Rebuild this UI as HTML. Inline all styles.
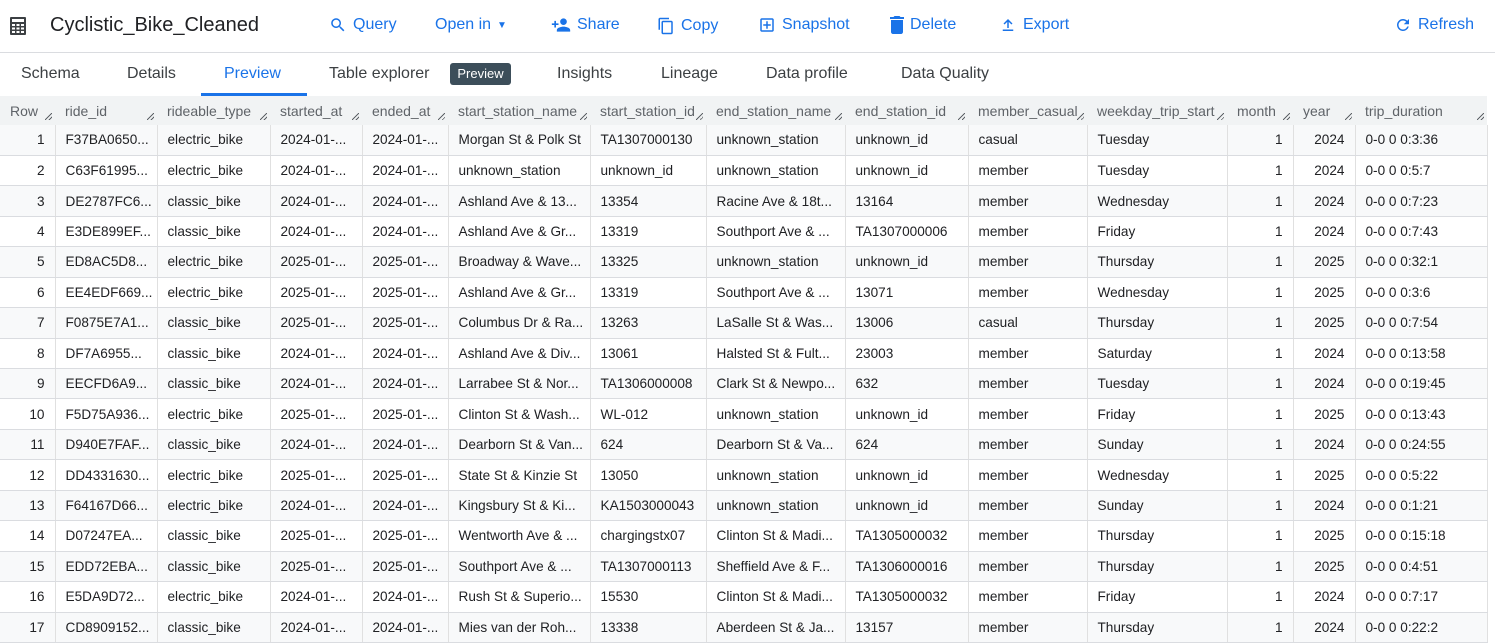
<!DOCTYPE html>
<html><head><meta charset="utf-8"><style>
*{margin:0;padding:0;box-sizing:border-box}
body{width:1495px;height:642px;overflow:hidden;background:#fff;font-family:"Liberation Sans",Arial,sans-serif;color:#202124;position:relative}
.top{position:absolute;left:0;top:0;width:1495px;height:53px;border-bottom:1px solid #dadce0}
.title{position:absolute;left:50px;top:14px;font-size:20px;color:#202124}
.btn{position:absolute;top:16px;font-size:16px;color:#1a73e8;display:flex;align-items:center;gap:6px}
.btn svg{fill:#1a73e8}
.tabs{position:absolute;top:53px;left:0;width:1495px;height:43px}
.tab{position:absolute;top:12px;font-size:16px;color:#3c4043}
.tab.act{color:#1a73e8}
.badge{position:absolute;left:450px;top:63px;width:61px;height:22px;background:#3c4e5a;color:#fff;font-size:13px;border-radius:3px;text-align:center;line-height:22px}
table{position:absolute;left:0;top:96px;border-collapse:collapse;table-layout:fixed;width:1487px;font-size:13.6px}
th{height:29px;background:#f1f3f4;color:#5f6368;font-weight:normal;text-align:left;padding:0 10px;position:relative;white-space:nowrap;overflow:hidden;font-size:14px}
th:after{content:"";position:absolute;right:3px;bottom:5px;width:7px;height:7px;background:linear-gradient(135deg,transparent 45%,#5f6368 45%,#5f6368 55%,transparent 55%,transparent 75%,#5f6368 75%,#5f6368 85%,transparent 85%)}
td{height:30.45px;padding:0 10px;border-right:1px solid #e0e0e0;border-bottom:1px solid #dadce0;white-space:nowrap;overflow:hidden}
tr:nth-child(even) td{background:#f8f9fa}
td:first-child,td:nth-child(12),td:nth-child(13){text-align:right}
</style></head><body>
<div class="top">
<svg style="position:absolute;left:10px;top:17px" width="16" height="18" viewBox="0 0 16 18"><rect x="0" y="0" width="16" height="18" rx="1" fill="#3c4043"/><rect x="2" y="2" width="12" height="3" fill="#fff"/><g fill="#fff"><rect x="2" y="7" width="3" height="2"/><rect x="6.5" y="7" width="3" height="2"/><rect x="11" y="7" width="3" height="2"/><rect x="2" y="10.5" width="3" height="2"/><rect x="6.5" y="10.5" width="3" height="2"/><rect x="11" y="10.5" width="3" height="2"/><rect x="2" y="14" width="3" height="2"/><rect x="6.5" y="14" width="3" height="2"/><rect x="11" y="14" width="3" height="2"/></g></svg>
<div class="title">Cyclistic_Bike_Cleaned</div>
<div class="btn" style="left:329px"><svg width="18" height="18" viewBox="0 0 24 24"><path d="M15.5 14h-.8l-.3-.3A6.5 6.5 0 1 0 9.5 16c1.6 0 3.1-.6 4.2-1.6l.3.3v.8l5 5 1.5-1.5-5-5zm-6 0C7 14 5 12 5 9.5S7 5 9.5 5 14 7 14 9.5 12 14 9.5 14z"/></svg>Query</div>
<div class="btn" style="left:435px">Open in <span style="font-size:10px">▼</span></div>
<div class="btn" style="left:551px"><svg width="20" height="16" viewBox="0 0 24 18"><path d="M15 9c2.2 0 4-1.8 4-4s-1.8-4-4-4-4 1.8-4 4 1.8 4 4 4zM6 7V4H4v3H1v2h3v3h2V9h3V7H6zm9 4c-2.7 0-8 1.3-8 4v2h16v-2c0-2.7-5.3-4-8-4z"/></svg>Share</div>
<div class="btn" style="left:657px"><svg width="18" height="20" viewBox="0 0 24 24"><path d="M16 1H4c-1.1 0-2 .9-2 2v14h2V3h12V1zm3 4H8c-1.1 0-2 .9-2 2v14c0 1.1.9 2 2 2h11c1.1 0 2-.9 2-2V7c0-1.1-.9-2-2-2zm0 16H8V7h11v14z"/></svg>Copy</div>
<div class="btn" style="left:758px"><svg width="18" height="18" viewBox="0 0 24 24"><path d="M19 3H5c-1.1 0-2 .9-2 2v14c0 1.1.9 2 2 2h14c1.1 0 2-.9 2-2V5c0-1.1-.9-2-2-2zm0 16H5V5h14v14zM11 7h2v4h4v2h-4v4h-2v-4H7v-2h4z"/></svg>Snapshot</div>
<div class="btn" style="left:890px"><svg width="14" height="18" viewBox="0 0 14 18"><path d="M1 16c0 1.1.9 2 2 2h8c1.1 0 2-.9 2-2V4H1v12zM14 1h-3.5l-1-1h-5l-1 1H0v2h14V1z"/></svg>Delete</div>
<div class="btn" style="left:999px"><svg width="18" height="18" viewBox="0 0 24 24"><path d="M5 18h14v2H5zM11 16V7.8L7.4 11.4 6 10l6-6 6 6-1.4 1.4L13 7.8V16z"/></svg>Export</div>
<div class="btn" style="left:1394px"><svg width="18" height="18" viewBox="0 0 24 24"><path d="M17.65 6.35A7.96 7.96 0 0 0 12 4a8 8 0 1 0 7.75 10h-2.08A6 6 0 1 1 12 6c1.66 0 3.14.69 4.22 1.78L13 11h7V4l-2.35 2.35z"/></svg>Refresh</div>
</div>
<div class="tabs">
<div class="tab" style="left:21px">Schema</div>
<div class="tab" style="left:127px">Details</div>
<div class="tab act" style="left:224px">Preview</div>
<div style="position:absolute;left:201px;top:40px;width:106px;height:3px;background:#1a73e8"></div>
<div class="tab" style="left:329px">Table explorer</div>
<div class="tab" style="left:557px">Insights</div>
<div class="tab" style="left:661px">Lineage</div>
<div class="tab" style="left:766px">Data profile</div>
<div class="tab" style="left:901px">Data Quality</div>
</div>
<div class="badge">Preview</div>
<table>
<colgroup><col style="width:55px"><col style="width:102px"><col style="width:113px"><col style="width:92px"><col style="width:86px"><col style="width:142px"><col style="width:116px"><col style="width:139px"><col style="width:123px"><col style="width:119px"><col style="width:140px"><col style="width:66px"><col style="width:62px"><col style="width:132px"></colgroup>
<tr><th>Row</th><th>ride_id</th><th>rideable_type</th><th>started_at</th><th>ended_at</th><th>start_station_name</th><th>start_station_id</th><th>end_station_name</th><th>end_station_id</th><th>member_casual</th><th>weekday_trip_start</th><th>month</th><th>year</th><th>trip_duration</th></tr>
<tr><td>1</td><td>F37BA0650...</td><td>electric_bike</td><td>2024-01-...</td><td>2024-01-...</td><td>Morgan St &amp; Polk St</td><td>TA1307000130</td><td>unknown_station</td><td>unknown_id</td><td>casual</td><td>Tuesday</td><td>1</td><td>2024</td><td>0-0 0 0:3:36</td></tr>
<tr><td>2</td><td>C63F61995...</td><td>electric_bike</td><td>2024-01-...</td><td>2024-01-...</td><td>unknown_station</td><td>unknown_id</td><td>unknown_station</td><td>unknown_id</td><td>member</td><td>Tuesday</td><td>1</td><td>2024</td><td>0-0 0 0:5:7</td></tr>
<tr><td>3</td><td>DE2787FC6...</td><td>classic_bike</td><td>2024-01-...</td><td>2024-01-...</td><td>Ashland Ave &amp; 13...</td><td>13354</td><td>Racine Ave &amp; 18t...</td><td>13164</td><td>member</td><td>Wednesday</td><td>1</td><td>2024</td><td>0-0 0 0:7:23</td></tr>
<tr><td>4</td><td>E3DE899EF...</td><td>classic_bike</td><td>2024-01-...</td><td>2024-01-...</td><td>Ashland Ave &amp; Gr...</td><td>13319</td><td>Southport Ave &amp; ...</td><td>TA1307000006</td><td>member</td><td>Friday</td><td>1</td><td>2024</td><td>0-0 0 0:7:43</td></tr>
<tr><td>5</td><td>ED8AC5D8...</td><td>electric_bike</td><td>2025-01-...</td><td>2025-01-...</td><td>Broadway &amp; Wave...</td><td>13325</td><td>unknown_station</td><td>unknown_id</td><td>member</td><td>Thursday</td><td>1</td><td>2025</td><td>0-0 0 0:32:1</td></tr>
<tr><td>6</td><td>EE4EDF669...</td><td>electric_bike</td><td>2025-01-...</td><td>2025-01-...</td><td>Ashland Ave &amp; Gr...</td><td>13319</td><td>Southport Ave &amp; ...</td><td>13071</td><td>member</td><td>Wednesday</td><td>1</td><td>2025</td><td>0-0 0 0:3:6</td></tr>
<tr><td>7</td><td>F0875E7A1...</td><td>classic_bike</td><td>2025-01-...</td><td>2025-01-...</td><td>Columbus Dr &amp; Ra...</td><td>13263</td><td>LaSalle St &amp; Was...</td><td>13006</td><td>casual</td><td>Thursday</td><td>1</td><td>2025</td><td>0-0 0 0:7:54</td></tr>
<tr><td>8</td><td>DF7A6955...</td><td>classic_bike</td><td>2024-01-...</td><td>2024-01-...</td><td>Ashland Ave &amp; Div...</td><td>13061</td><td>Halsted St &amp; Fult...</td><td>23003</td><td>member</td><td>Saturday</td><td>1</td><td>2024</td><td>0-0 0 0:13:58</td></tr>
<tr><td>9</td><td>EECFD6A9...</td><td>classic_bike</td><td>2024-01-...</td><td>2024-01-...</td><td>Larrabee St &amp; Nor...</td><td>TA1306000008</td><td>Clark St &amp; Newpo...</td><td>632</td><td>member</td><td>Tuesday</td><td>1</td><td>2024</td><td>0-0 0 0:19:45</td></tr>
<tr><td>10</td><td>F5D75A936...</td><td>electric_bike</td><td>2025-01-...</td><td>2025-01-...</td><td>Clinton St &amp; Wash...</td><td>WL-012</td><td>unknown_station</td><td>unknown_id</td><td>member</td><td>Friday</td><td>1</td><td>2025</td><td>0-0 0 0:13:43</td></tr>
<tr><td>11</td><td>D940E7FAF...</td><td>classic_bike</td><td>2024-01-...</td><td>2024-01-...</td><td>Dearborn St &amp; Van...</td><td>624</td><td>Dearborn St &amp; Va...</td><td>624</td><td>member</td><td>Sunday</td><td>1</td><td>2024</td><td>0-0 0 0:24:55</td></tr>
<tr><td>12</td><td>DD4331630...</td><td>electric_bike</td><td>2025-01-...</td><td>2025-01-...</td><td>State St &amp; Kinzie St</td><td>13050</td><td>unknown_station</td><td>unknown_id</td><td>member</td><td>Wednesday</td><td>1</td><td>2025</td><td>0-0 0 0:5:22</td></tr>
<tr><td>13</td><td>F64167D66...</td><td>electric_bike</td><td>2024-01-...</td><td>2024-01-...</td><td>Kingsbury St &amp; Ki...</td><td>KA1503000043</td><td>unknown_station</td><td>unknown_id</td><td>member</td><td>Sunday</td><td>1</td><td>2024</td><td>0-0 0 0:1:21</td></tr>
<tr><td>14</td><td>D07247EA...</td><td>classic_bike</td><td>2025-01-...</td><td>2025-01-...</td><td>Wentworth Ave &amp; ...</td><td>chargingstx07</td><td>Clinton St &amp; Madi...</td><td>TA1305000032</td><td>member</td><td>Thursday</td><td>1</td><td>2025</td><td>0-0 0 0:15:18</td></tr>
<tr><td>15</td><td>EDD72EBA...</td><td>classic_bike</td><td>2025-01-...</td><td>2025-01-...</td><td>Southport Ave &amp; ...</td><td>TA1307000113</td><td>Sheffield Ave &amp; F...</td><td>TA1306000016</td><td>member</td><td>Thursday</td><td>1</td><td>2025</td><td>0-0 0 0:4:51</td></tr>
<tr><td>16</td><td>E5DA9D72...</td><td>electric_bike</td><td>2024-01-...</td><td>2024-01-...</td><td>Rush St &amp; Superio...</td><td>15530</td><td>Clinton St &amp; Madi...</td><td>TA1305000032</td><td>member</td><td>Friday</td><td>1</td><td>2024</td><td>0-0 0 0:7:17</td></tr>
<tr><td>17</td><td>CD8909152...</td><td>classic_bike</td><td>2024-01-...</td><td>2024-01-...</td><td>Mies van der Roh...</td><td>13338</td><td>Aberdeen St &amp; Ja...</td><td>13157</td><td>member</td><td>Thursday</td><td>1</td><td>2024</td><td>0-0 0 0:22:2</td></tr>
</table>
</body></html>
